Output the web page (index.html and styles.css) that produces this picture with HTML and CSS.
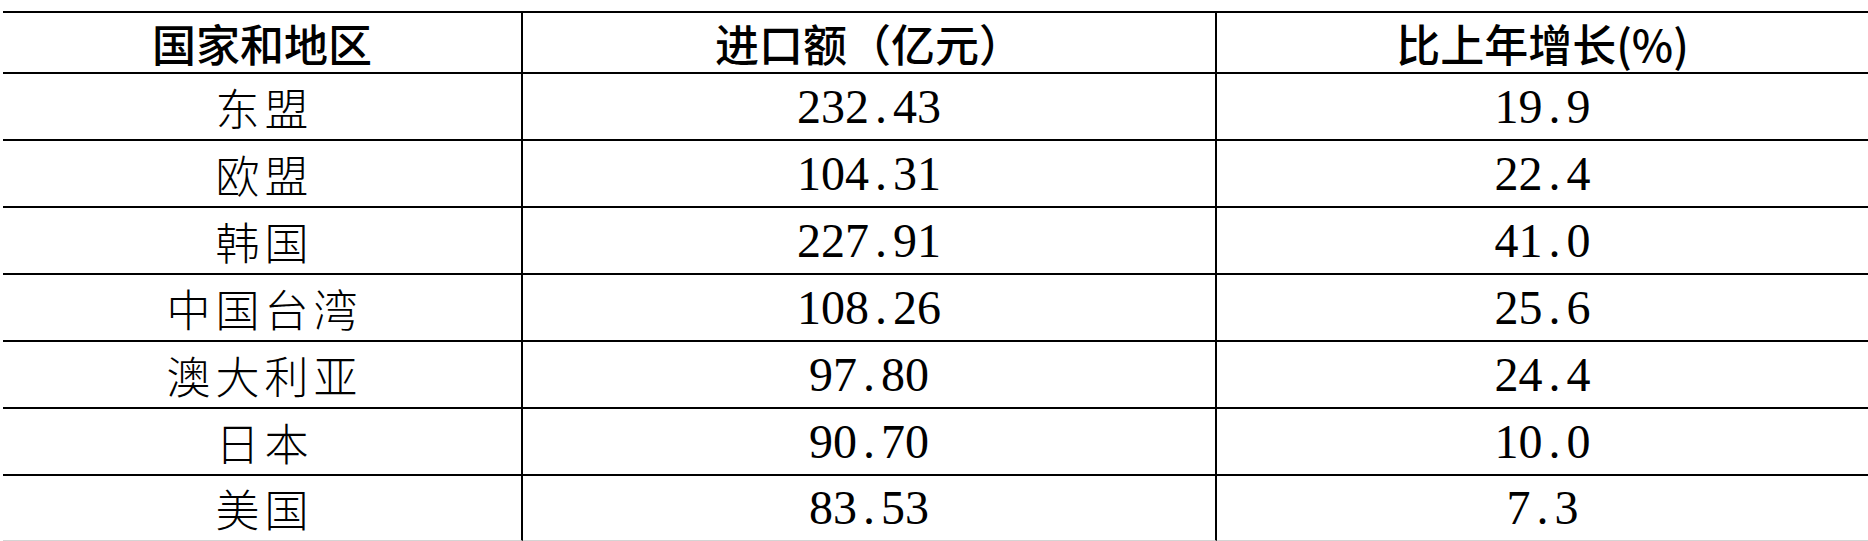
FILE: index.html
```html
<!DOCTYPE html>
<html>
<head>
<meta charset="utf-8">
<link rel="stylesheet" href="styles.css">
</head>
<body>
<div class="trade">
  <div class="cell head first">国家和地区</div>
  <div class="cell head mid">进口额（亿元）</div>
  <div class="cell head">比上年增长(%)</div>

  <div class="cell name first">东盟</div>
  <div class="cell num mid">232<span class="dot">.</span>43</div>
  <div class="cell num">19<span class="dot">.</span>9</div>

  <div class="cell name first">欧盟</div>
  <div class="cell num mid">104<span class="dot">.</span>31</div>
  <div class="cell num">22<span class="dot">.</span>4</div>

  <div class="cell name first">韩国</div>
  <div class="cell num mid">227<span class="dot">.</span>91</div>
  <div class="cell num">41<span class="dot">.</span>0</div>

  <div class="cell name first">中国台湾</div>
  <div class="cell num mid">108<span class="dot">.</span>26</div>
  <div class="cell num">25<span class="dot">.</span>6</div>

  <div class="cell name first">澳大利亚</div>
  <div class="cell num mid">97<span class="dot">.</span>80</div>
  <div class="cell num">24<span class="dot">.</span>4</div>

  <div class="cell name first">日本</div>
  <div class="cell num mid">90<span class="dot">.</span>70</div>
  <div class="cell num">10<span class="dot">.</span>0</div>

  <div class="cell name first last">美国</div>
  <div class="cell num mid last">83<span class="dot">.</span>53</div>
  <div class="cell num last">7<span class="dot">.</span>3</div>
</div>
</body>
</html>
```
FILE: styles.css
```css
body {
  margin: 0;
  background: #ffffff;
  overflow: hidden;
}
.trade {
  display: grid;
  grid-template-columns: 520px 694px 651px;
  grid-template-rows: 63px repeat(6, 67px) 65px;
  margin: 11px 0 0 3px;
  color: #000000;
}
.cell {
  box-sizing: border-box;
  display: flex;
  align-items: center;
  justify-content: center;
  border-bottom: 2px solid #000000;
}
.first, .mid {
  border-right: 2px solid #000000;
}
.head {
  border-top: 2px solid #000000;
  font-family: "Noto Sans CJK SC", sans-serif;
  font-weight: 500;
  font-size: 44px;
  line-height: 1;
}
.name {
  font-family: "Noto Sans CJK SC", sans-serif;
  font-weight: 300;
  font-size: 44px;
  letter-spacing: 5px;
  padding-left: 5px;
  line-height: 1;
}
.num {
  font-family: "Liberation Serif", serif;
  font-size: 48px;
  line-height: 1;
}
.dot {
  display: inline-block;
  width: 24px;
  text-align: center;
}
.last {
  border-bottom: 1px solid #d4d4d4;
}
```
